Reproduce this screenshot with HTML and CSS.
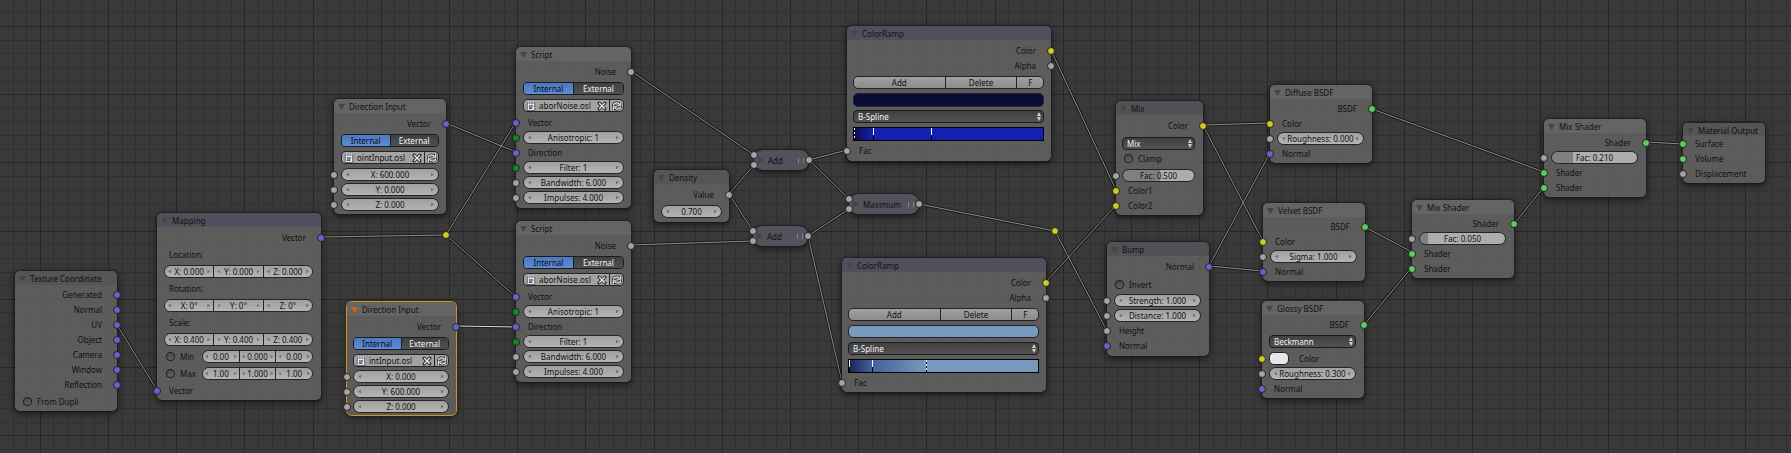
FILE: index.html
```html
<!DOCTYPE html>
<html lang="en">
<head>
<meta charset="utf-8">
<title>Node Editor</title>
<link rel="stylesheet" href="styles.css">
</head>
<body>
<svg class="defs" aria-hidden="true">
  <symbol id="i-text" viewBox="0 0 12 12"><path d="M1.500 2.500h9v9h-9z" fill="#e8e8e8" stroke="#333" stroke-width=".8"/><path d="M1.500 1.500h9v2h-9z" fill="#5a80c0"/><path d="M3 .5v3M5 .5v3M7 .5v3M9 .5v3" stroke="#dfe6f5" stroke-width=".8"/><path d="M3.500 6h5M3.500 8.500h4" stroke="#222" stroke-width="1.400"/></symbol>
  <symbol id="i-x" viewBox="0 0 12 12"><path d="M2.500 2.500l7 7M9.500 2.500l-7 7" stroke="#222" stroke-width="3.600" stroke-linecap="round"/><path d="M2.500 2.500l7 7M9.500 2.500l-7 7" stroke="#eee" stroke-width="1.600"/></symbol>
  <symbol id="i-reload" viewBox="0 0 12 12"><g fill="none" stroke="#222" stroke-width="3.200"><path d="M1.500 5.500C2 2 6 1.500 9 3.500M10.500 6.500C10 10 6 10.500 3 8.500M10.500 1v4h-4M1.500 11V7h4"/></g><g fill="none" stroke="#eee" stroke-width="1.500"><path d="M1.500 5.500C2 2 6 1.500 9 3.500M10.500 6.500C10 10 6 10.500 3 8.500M10.500 1v4h-4M1.500 11V7h4"/></g></symbol>
</svg>
<main class="canvas">
  <svg class="backdrop" aria-hidden="true">
    <defs>
      <pattern id="cols" x="108" y="0" width="341" height="20" patternUnits="userSpaceOnUse">
        <path class="minor" d="M14 0v20M27 0v20M41 0v20M55 0v20M82 0v20M95 0v20M109 0v20M123 0v20M150 0v20M164 0v20M177 0v20M191 0v20M218 0v20M232 0v20M246 0v20M259 0v20M286 0v20M300 0v20M314 0v20M327 0v20" transform="translate(.5 0)"/>
        <path class="major" d="M0 0v20M68 0v20M136 0v20M205 0v20M273 0v20" transform="translate(.5 0)"/>
      </pattern>
      <pattern id="rows" x="0" y="26" width="20" height="341" patternUnits="userSpaceOnUse">
        <path class="minor" d="M0 14h20M0 27h20M0 41h20M0 55h20M0 82h20M0 95h20M0 109h20M0 123h20M0 150h20M0 164h20M0 177h20M0 191h20M0 218h20M0 232h20M0 246h20M0 259h20M0 286h20M0 300h20M0 314h20M0 327h20" transform="translate(0 .5)"/>
        <path class="major" d="M0 0h20M0 68h20M0 136h20M0 205h20M0 273h20" transform="translate(0 .5)"/>
      </pattern>
      <path id="wires" d="M117 325L157 390M321 237L446 235M446 235L516 122M446 235L516 297M446 123L516 152M631 71L754 155M631 245L753 241M729 194L754 165M729 194L753 231M809 160L847 150M809 160L849 199M808 236L849 209M808 236L842 382M919 204L1055 231M1055 231L1107 331M1051 50L1116 190M1046 282L1116 205M1203 125L1270 123M1203 125L1263 241M1209 266L1270 153M1209 266L1263 271M1372 109L1544 172M1365 227L1412 252M1364 325L1412 267M1514 224L1544 187M1646 142L1683 144"/>
    </defs>
    <rect width="100%" height="100%" fill="url(#cols)"/>
    <rect width="100%" height="100%" fill="url(#rows)"/>
    <use href="#wires" class="wire-edge"/>
    <use href="#wires" class="wire"/>
    <path class="wire-edge" d="M457 326L516 327"/>
    <path class="wire wire-active" d="M457 326L516 327"/>
  </svg>

  <section class="node n-texcoord">
    <h2 class="head dim"><button class="fold" aria-label="Collapse"></button>Texture Coordinate</h2>
    <div class="row out">Generated<i class="sock vec"></i></div>
    <div class="row out">Normal<i class="sock vec"></i></div>
    <div class="row out">UV<i class="sock vec"></i></div>
    <div class="row out">Object<i class="sock vec"></i></div>
    <div class="row out">Camera<i class="sock vec"></i></div>
    <div class="row out">Window<i class="sock vec"></i></div>
    <div class="row out">Reflection<i class="sock vec"></i></div>
    <div class="group"><label class="row check"><input type="checkbox">From Dupli</label></div>
  </section>

  <section class="node n-mapping">
    <h2 class="head cool"><button class="fold" aria-label="Collapse"></button>Mapping</h2>
    <div class="row out">Vector<i class="sock vec"></i></div>
    <div class="row in">Location:</div>
    <div class="row field"><div class="trio"><span class="num"><input aria-label="Location X" value="X: 0.000"></span><span class="num"><input aria-label="Location Y" value="Y: 0.000"></span><span class="num"><input aria-label="Location Z" value="Z: 0.000"></span></div></div>
    <div class="row in">Rotation:</div>
    <div class="row field"><div class="trio"><span class="num"><input aria-label="Rotation X" value="X: 0°"></span><span class="num"><input aria-label="Rotation Y" value="Y: 0°"></span><span class="num"><input aria-label="Rotation Z" value="Z: 0°"></span></div></div>
    <div class="row in">Scale:</div>
    <div class="row field"><div class="trio"><span class="num"><input aria-label="Scale X" value="X: 0.400"></span><span class="num"><input aria-label="Scale Y" value="Y: 0.400"></span><span class="num"><input aria-label="Scale Z" value="Z: 0.400"></span></div></div>
    <div class="row field"><label class="check limit"><input type="checkbox">Min</label><div class="trio"><span class="num"><input aria-label="Min X" value="0.00"></span><span class="num"><input aria-label="Min Y" value="0.000"></span><span class="num"><input aria-label="Min Z" value="0.00"></span></div></div>
    <div class="row field"><label class="check limit"><input type="checkbox">Max</label><div class="trio"><span class="num"><input aria-label="Max X" value="1.00"></span><span class="num"><input aria-label="Max Y" value="1.000"></span><span class="num"><input aria-label="Max Z" value="1.00"></span></div></div>
    <div class="row in">Vector<i class="sock vec"></i></div>
  </section>

  <section class="node n-dir1">
    <h2 class="head"><button class="fold" aria-label="Collapse"></button>Direction Input</h2>
    <div class="row out">Vector<i class="sock vec"></i></div>
    <div class="group">
      <div class="row field"><div class="toggle"><button class="on">Internal</button><button>External</button></div></div>
      <div class="row field"><div class="file"><svg class="ico"><use href="#i-text"/></svg><input aria-label="Script" value="ointInput.osl"><button aria-label="Unlink"><svg class="ico"><use href="#i-x"/></svg></button><button class="reload" aria-label="Reload"><svg class="ico"><use href="#i-reload"/></svg></button></div></div>
    </div>
    <div class="row field"><i class="sock val"></i><span class="num"><input aria-label="X" value="X: 600.000"></span></div>
    <div class="row field"><i class="sock val"></i><span class="num"><input aria-label="Y" value="Y: 0.000"></span></div>
    <div class="row field"><i class="sock val"></i><span class="num"><input aria-label="Z" value="Z: 0.000"></span></div>
  </section>

  <section class="node n-dir2 selected">
    <h2 class="head"><button class="fold" aria-label="Collapse"></button>Direction Input</h2>
    <div class="row out">Vector<i class="sock vec"></i></div>
    <div class="group">
      <div class="row field"><div class="toggle"><button class="on">Internal</button><button>External</button></div></div>
      <div class="row field"><div class="file"><svg class="ico"><use href="#i-text"/></svg><input aria-label="Script" value="intInput.osl"><button aria-label="Unlink"><svg class="ico"><use href="#i-x"/></svg></button><button class="reload" aria-label="Reload"><svg class="ico"><use href="#i-reload"/></svg></button></div></div>
    </div>
    <div class="row field"><i class="sock val"></i><span class="num"><input aria-label="X" value="X: 0.000"></span></div>
    <div class="row field"><i class="sock val"></i><span class="num"><input aria-label="Y" value="Y: 600.000"></span></div>
    <div class="row field"><i class="sock val"></i><span class="num"><input aria-label="Z" value="Z: 0.000"></span></div>
  </section>

  <section class="node n-script1">
    <h2 class="head"><button class="fold" aria-label="Collapse"></button>Script</h2>
    <div class="row out">Noise<i class="sock val"></i></div>
    <div class="group">
      <div class="row field"><div class="toggle"><button class="on">Internal</button><button>External</button></div></div>
      <div class="row field"><div class="file"><svg class="ico"><use href="#i-text"/></svg><input aria-label="Script" value="aborNoise.osl"><button aria-label="Unlink"><svg class="ico"><use href="#i-x"/></svg></button><button class="reload" aria-label="Reload"><svg class="ico"><use href="#i-reload"/></svg></button></div></div>
    </div>
    <div class="row in">Vector<i class="sock vec"></i></div>
    <div class="row field"><i class="sock int"></i><span class="num"><input aria-label="Anisotropic" value="Anisotropic: 1"></span></div>
    <div class="row in">Direction<i class="sock vec"></i></div>
    <div class="row field"><i class="sock int"></i><span class="num"><input aria-label="Filter" value="Filter: 1"></span></div>
    <div class="row field"><i class="sock val"></i><span class="num"><input aria-label="Bandwidth" value="Bandwidth: 6.000"></span></div>
    <div class="row field"><i class="sock val"></i><span class="num"><input aria-label="Impulses" value="Impulses: 4.000"></span></div>
  </section>

  <section class="node n-script2">
    <h2 class="head"><button class="fold" aria-label="Collapse"></button>Script</h2>
    <div class="row out">Noise<i class="sock val"></i></div>
    <div class="group">
      <div class="row field"><div class="toggle"><button class="on">Internal</button><button>External</button></div></div>
      <div class="row field"><div class="file"><svg class="ico"><use href="#i-text"/></svg><input aria-label="Script" value="aborNoise.osl"><button aria-label="Unlink"><svg class="ico"><use href="#i-x"/></svg></button><button class="reload" aria-label="Reload"><svg class="ico"><use href="#i-reload"/></svg></button></div></div>
    </div>
    <div class="row in">Vector<i class="sock vec"></i></div>
    <div class="row field"><i class="sock int"></i><span class="num"><input aria-label="Anisotropic" value="Anisotropic: 1"></span></div>
    <div class="row in">Direction<i class="sock vec"></i></div>
    <div class="row field"><i class="sock int"></i><span class="num"><input aria-label="Filter" value="Filter: 1"></span></div>
    <div class="row field"><i class="sock val"></i><span class="num"><input aria-label="Bandwidth" value="Bandwidth: 6.000"></span></div>
    <div class="row field"><i class="sock val"></i><span class="num"><input aria-label="Impulses" value="Impulses: 4.000"></span></div>
  </section>

  <section class="node n-density">
    <h2 class="head dim"><button class="fold" aria-label="Collapse"></button>Density</h2>
    <div class="row out">Value<i class="sock val"></i></div>
    <div class="group"><div class="row field"><span class="num"><input aria-label="Density" value="0.700"></span></div></div>
  </section>

  <section class="mini m-add1"><button class="fold" aria-label="Expand"></button><h2>Add</h2><i class="sock val a"></i><i class="sock val b"></i><i class="sock val c"></i></section>
  <section class="mini m-add2"><button class="fold" aria-label="Expand"></button><h2>Add</h2><i class="sock val a"></i><i class="sock val b"></i><i class="sock val c"></i></section>
  <section class="mini m-max"><button class="fold" aria-label="Expand"></button><h2>Maximum</h2><i class="sock val a"></i><i class="sock val b"></i><i class="sock val c"></i></section>

  <section class="node n-ramp1">
    <h2 class="head cool"><button class="fold" aria-label="Collapse"></button>ColorRamp</h2>
    <div class="row out">Color<i class="sock col"></i></div>
    <div class="row out">Alpha<i class="sock val"></i></div>
    <div class="group">
      <div class="row field"><div class="actions"><button>Add</button><button>Delete</button><button>F</button></div></div>
      <div class="row field"><button class="swatch navy" aria-label="Stop color"></button></div>
      <div class="row field"><span class="drop"><select aria-label="Interpolation"><option>B-Spline</option></select></span></div>
      <div class="row field"><div class="ramp deep"><i class="stop dashed" style="left:0%"></i><i class="stop" style="left:10%"></i><i class="stop" style="left:41%"></i></div></div>
    </div>
    <div class="row in">Fac<i class="sock val"></i></div>
  </section>

  <section class="node n-ramp2">
    <h2 class="head cool"><button class="fold" aria-label="Collapse"></button>ColorRamp</h2>
    <div class="row out">Color<i class="sock col"></i></div>
    <div class="row out">Alpha<i class="sock val"></i></div>
    <div class="group">
      <div class="row field"><div class="actions"><button>Add</button><button>Delete</button><button>F</button></div></div>
      <div class="row field"><button class="swatch sky" aria-label="Stop color"></button></div>
      <div class="row field"><span class="drop"><select aria-label="Interpolation"><option>B-Spline</option></select></span></div>
      <div class="row field"><div class="ramp pale"><i class="stop" style="left:0%"></i><i class="stop" style="left:12%"></i><i class="stop dashed" style="left:41%"></i></div></div>
    </div>
    <div class="row in">Fac<i class="sock val"></i></div>
  </section>

  <section class="node n-mix">
    <h2 class="head warm"><button class="fold" aria-label="Collapse"></button>Mix</h2>
    <div class="row out">Color<i class="sock col"></i></div>
    <div class="group">
      <div class="row field"><span class="drop"><select aria-label="Blend"><option>Mix</option></select></span></div>
      <label class="row check"><input type="checkbox">Clamp</label>
    </div>
    <div class="row field"><i class="sock val"></i><span class="num slider half"><input aria-label="Fac" value="Fac: 0.500"></span></div>
    <div class="row in">Color1<i class="sock col"></i></div>
    <div class="row in">Color2<i class="sock col"></i></div>
  </section>

  <section class="node n-bump">
    <h2 class="head warm"><button class="fold" aria-label="Collapse"></button>Bump</h2>
    <div class="row out">Normal<i class="sock vec"></i></div>
    <div class="group"><label class="row check"><input type="checkbox">Invert</label></div>
    <div class="row field"><i class="sock val"></i><span class="num"><input aria-label="Strength" value="Strength: 1.000"></span></div>
    <div class="row field"><i class="sock val"></i><span class="num"><input aria-label="Distance" value="Distance: 1.000"></span></div>
    <div class="row in">Height<i class="sock val"></i></div>
    <div class="row in">Normal<i class="sock vec"></i></div>
  </section>

  <section class="node shader n-diffuse">
    <h2 class="head"><button class="fold" aria-label="Collapse"></button>Diffuse BSDF</h2>
    <div class="row out">BSDF<i class="sock shd"></i></div>
    <div class="row in">Color<i class="sock col"></i></div>
    <div class="row field"><i class="sock val"></i><span class="num"><input aria-label="Roughness" value="Roughness: 0.000"></span></div>
    <div class="row in">Normal<i class="sock vec"></i></div>
  </section>

  <section class="node shader n-velvet">
    <h2 class="head"><button class="fold" aria-label="Collapse"></button>Velvet BSDF</h2>
    <div class="row out">BSDF<i class="sock shd"></i></div>
    <div class="row in">Color<i class="sock col"></i></div>
    <div class="row field"><i class="sock val"></i><span class="num"><input aria-label="Sigma" value="Sigma: 1.000"></span></div>
    <div class="row in">Normal<i class="sock vec"></i></div>
  </section>

  <section class="node shader n-glossy">
    <h2 class="head"><button class="fold" aria-label="Collapse"></button>Glossy BSDF</h2>
    <div class="row out">BSDF<i class="sock shd"></i></div>
    <div class="group"><div class="row field"><span class="drop"><select aria-label="Distribution"><option>Beckmann</option></select></span></div></div>
    <div class="row field"><i class="sock col"></i><button class="swatch chip" aria-label="Glossy color"></button><span>Color</span></div>
    <div class="row field"><i class="sock val"></i><span class="num"><input aria-label="Roughness" value="Roughness: 0.300"></span></div>
    <div class="row in">Normal<i class="sock vec"></i></div>
  </section>

  <section class="node shader n-mixsh1">
    <h2 class="head"><button class="fold" aria-label="Collapse"></button>Mix Shader</h2>
    <div class="row out">Shader<i class="sock shd"></i></div>
    <div class="row field"><i class="sock val"></i><span class="num slider tenth"><input aria-label="Fac" value="Fac: 0.050"></span></div>
    <div class="row in">Shader<i class="sock shd"></i></div>
    <div class="row in">Shader<i class="sock shd"></i></div>
  </section>

  <section class="node shader n-mixsh2">
    <h2 class="head"><button class="fold" aria-label="Collapse"></button>Mix Shader</h2>
    <div class="row out">Shader<i class="sock shd"></i></div>
    <div class="row field"><i class="sock val"></i><span class="num slider quarter"><input aria-label="Fac" value="Fac: 0.210"></span></div>
    <div class="row in">Shader<i class="sock shd"></i></div>
    <div class="row in">Shader<i class="sock shd"></i></div>
  </section>

  <section class="node n-output">
    <h2 class="head dim"><button class="fold" aria-label="Collapse"></button>Material Output</h2>
    <div class="row in">Surface<i class="sock shd"></i></div>
    <div class="row in">Volume<i class="sock shd"></i></div>
    <div class="row in">Displacement<i class="sock val"></i></div>
  </section>

  <i class="sock col reroute r-1"></i>
  <i class="sock col reroute r-2"></i>
</main>
</body>
</html>
```
FILE: styles.css
```css
* { box-sizing: border-box; }
body { margin: 0; background: #393939; color: #101010; font: 8px/12px "Noto Sans", "DejaVu Sans", sans-serif; }
button, input, select { font: inherit; color: inherit; margin: 0; padding: 0; border: 0; background: none; min-width: 0; }
h2 { margin: 0; font: inherit; }
.defs { position: absolute; width: 0; height: 0; }

.canvas { position: relative; min-height: 100vh; overflow: hidden; }
.backdrop { position: absolute; inset: 0; width: 100%; height: 100%; }
.minor { stroke: #303030; fill: none; }
.major { stroke: #262626; fill: none; }
.wire-edge { stroke: #1c1c1c; stroke-width: 3; fill: none; }
.wire { stroke: #8c8c8c; stroke-width: 1; fill: none; }
.wire-active { stroke: #e0e0e0; }

/* Nodes */
.node { position: absolute; padding-bottom: 3px; border-radius: 5px; background: rgba(97, 97, 97, .9); box-shadow: 0 0 1px 1px rgba(20, 20, 20, .5), 0 2px 6px 1px rgba(0, 0, 0, .5); --pad-l: 7px; --pad-r: 7px; }
.node.selected { box-shadow: 0 0 0 1px #d98c26, 0 2px 6px 1px rgba(0, 0, 0, .5); }
.head { display: flex; align-items: center; height: 14px; margin-bottom: 3px; padding: 2px 0 0 4px; gap: 4px; border-radius: 5px 5px 0 0; background: rgba(108, 108, 108, .5); white-space: nowrap; }
.head.dim { background: rgba(82, 82, 82, .7); }
.head.cool { background: rgba(78, 78, 92, .8); }
.head.warm { background: rgba(80, 76, 84, .8); }
.fold { width: 7px; height: 6px; background: #454545; clip-path: polygon(0 0, 100% 0, 50% 100%); }
.selected .fold { background: #d4601c; }

.row { position: relative; display: flex; align-items: center; height: 15px; white-space: nowrap; }
.group { margin: 1px 0; }
.group .row { height: 17px; }
.out { justify-content: flex-end; padding-right: 15px; }
.in { padding-left: 12px; }
.field { padding: 0 var(--pad-r) 0 var(--pad-l); }
.check { gap: 5px; padding-left: 8px; }
.check input { appearance: none; width: 9px; height: 9px; border: 1px solid #1d1d1d; border-radius: 4px; background: linear-gradient(#484848, #626262); }

.sock { position: absolute; top: 50%; left: -4px; width: 8px; height: 8px; margin-top: -4px; border: 1px solid #222; border-radius: 50%; }
.out .sock { left: auto; right: -4px; }
.vec { background: #6464cc; }
.col { background: #cccc22; }
.val { background: #a4a4a4; }
.int { background: #118a22; }
.shd { background: #60cc60; }

/* Controls */
.num { display: flex; flex: 1 1 0; align-items: center; justify-content: space-between; min-width: 0; height: 13px; padding: 0 4px; border: 1px solid #242424; border-radius: 7px; background: linear-gradient(#a0a0a0, #b4b4b4); overflow: hidden; }
.num::before, .num::after { content: ""; flex: none; width: 3px; height: 4px; background: #747474; clip-path: polygon(0 50%, 100% 0, 100% 100%); }
.num::after { clip-path: polygon(0 0, 100% 50%, 0 100%); }
.num input { flex: 1; width: 0; height: 11px; text-align: center; }
.slider::before, .slider::after { visibility: hidden; }
.slider.half { background: linear-gradient(90deg, #808080 52%, #adadad 52%); }
.slider.quarter { background: linear-gradient(90deg, #808080 25%, #adadad 25%); }
.slider.tenth { background: linear-gradient(90deg, #808080 10%, #adadad 10%); }
.trio { display: flex; flex: 1; height: 13px; border: 1px solid #242424; border-radius: 7px; overflow: hidden; }
.trio .num { height: 11px; padding: 0 3px; border: 0; border-radius: 0; }
.limit + .trio .num { padding: 0 2px; }
.trio .num + .num { border-left: 1px solid #242424; }
.limit { display: flex; align-items: center; width: 38px; padding-left: 2px; }

.toggle { display: flex; flex: 1; height: 13px; border: 1px solid #1c1c1c; border-radius: 4px; overflow: hidden; }
.toggle button { flex: 1; height: 11px; line-height: 11px; color: #f4f4f4; background: linear-gradient(#404040, #505050); }
.toggle .on { color: #080808; background: linear-gradient(#4a78c2, #5d8cd8); border-right: 1px solid #1c1c1c; }
.file { display: flex; flex: 1; align-items: center; height: 13px; padding-left: 2px; border: 1px solid #242424; border-radius: 4px; background: #a2a2a2; overflow: hidden; }
.file input { flex: 1; width: 0; height: 11px; padding-left: 3px; }
.file button { display: flex; align-items: center; justify-content: center; width: 14px; height: 11px; }
.file .reload { border-left: 1px solid #242424; }
.ico { flex: none; width: 10px; height: 10px; }
.actions { display: flex; flex: 1; height: 13px; border: 1px solid #242424; border-radius: 5px; overflow: hidden; background: linear-gradient(#a0a0a0, #8c8c8c); }
.actions button { height: 11px; line-height: 11px; flex: 92 1 0; }
.actions button + button { flex-grow: 72; border-left: 1px solid #242424; }
.actions button + button + button { flex-grow: 26; }
.swatch { flex: 1; height: 14px; border: 1px solid #242424; border-radius: 5px; }
.navy { background: #0b0b3a; }
.sky { height: 13px; background: #7799bd; }
.chip { flex: none; width: 20px; height: 13px; margin-right: 10px; background: #e7e7e7; }
.drop { position: relative; display: flex; flex: 1; height: 13px; border: 1px solid #1c1c1c; border-radius: 4px; background: linear-gradient(#404040, #525252); }
.drop select { flex: 1; appearance: none; height: 11px; padding-left: 4px; line-height: 11px; color: #f4f4f4; }
.drop::before, .drop::after { content: ""; position: absolute; right: 2px; top: 1px; width: 4px; height: 4px; background: #d0d0d0; clip-path: polygon(50% 0, 100% 100%, 0 100%); }
.drop::after { top: 6px; clip-path: polygon(0 0, 100% 0, 50% 100%); }
.ramp { position: relative; flex: 1; height: 14px; border: 1px solid #000; }
.deep { background: linear-gradient(90deg, #0c0c48, #1320b2 10%); }
.pale { background: linear-gradient(90deg, #1c2258, #46609a 12%, #7799bd 41%); }
.stop { position: absolute; top: 0; width: 1px; height: 100%; background: linear-gradient(#fff 60%, #000 60%); }
.stop.dashed { background: repeating-linear-gradient(#fff 0 2px, #000 2px 4px); }

/* Collapsed nodes */
.mini { position: absolute; display: flex; align-items: center; height: 20px; padding: 0 5px 0 4px; gap: 4px; border-radius: 9px; background: #52525c; box-shadow: 0 0 1px 1px rgba(20, 20, 20, .5), 0 2px 6px 1px rgba(0, 0, 0, .5); }
.mini .fold { width: 6px; height: 7px; background: #44444c; clip-path: polygon(0 0, 100% 50%, 0 100%); }
.mini h2 { flex: 1; padding-top: 2px; }
.mini::after { content: ""; width: 4px; height: 5px; border: solid #85858f; border-width: 0 1px; }
.mini .a { top: 5px; }
.mini .b { top: 15px; }
.mini .c { left: auto; right: -4px; }

/* Positions on the canvas */
.n-texcoord { left: 15px; top: 271px; width: 102px; padding-bottom: 0; }
.n-texcoord .head { margin-bottom: 2px; }
.n-mapping { left: 157px; top: 213px; width: 164px; padding-bottom: 1px; --pad-r: 8px; }
.n-mapping .head { margin-bottom: 2px; }
.n-mapping .row { height: 17px; }
.n-dir1 { left: 334px; top: 99px; width: 112px; padding-bottom: 2px; }
.n-dir2 { left: 347px; top: 302px; width: 109px; padding-bottom: 1px; --pad-l: 6px; }
.n-dir2 .group { margin-bottom: 0; }
.n-script1 { left: 516px; top: 47px; width: 115px; }
.n-script2 { left: 516px; top: 221px; width: 115px; }
.n-density { left: 654px; top: 170px; width: 75px; padding-bottom: 1px; }
.n-ramp1 { left: 847px; top: 26px; width: 204px; --pad-l: 6px; }
.n-ramp2 { left: 842px; top: 258px; width: 204px; padding-bottom: 2px; --pad-l: 6px; }
.n-mix { left: 1116px; top: 101px; width: 87px; padding-bottom: 2px; --pad-l: 6px; --pad-r: 8px; }
.n-mix .group { margin: 2px 0 3px; }
.n-mix .check { height: 13px; }
.n-bump { left: 1107px; top: 242px; width: 102px; --pad-r: 8px; }
.n-bump .group { margin: 2px 0 0; }
.shader { width: 102px; padding-bottom: 2px; --pad-r: 8px; }
.shader .out { height: 14px; }
.n-diffuse { left: 1270px; top: 85px; }
.n-velvet { left: 1263px; top: 203px; }
.n-glossy { left: 1262px; top: 301px; }
.n-mixsh1 { left: 1412px; top: 200px; }
.n-mixsh2 { left: 1544px; top: 119px; }
.n-output { left: 1683px; top: 123px; width: 82px; padding-bottom: 2px; }
.n-output .head { height: 13px; margin-bottom: 0; }
.m-add1 { left: 754px; top: 150px; width: 55px; }
.m-add2 { left: 753px; top: 226px; width: 55px; }
.m-max { left: 849px; top: 194px; width: 70px; }
.r-1 { left: 442px; top: 235px; }
.r-2 { left: 1051px; top: 231px; }
```
